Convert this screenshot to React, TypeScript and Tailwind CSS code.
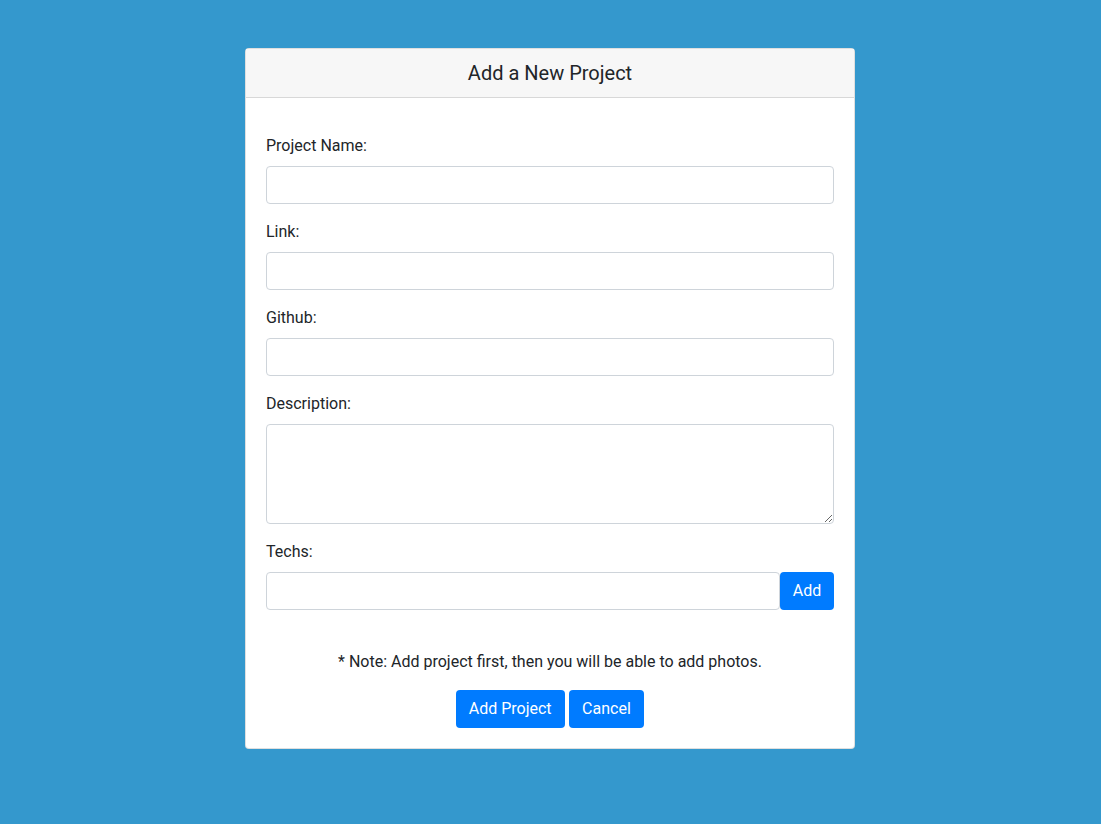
export default function App() {
  const fields = [
    { label: 'Project Name:', id: 'name' },
    { label: 'Link:', id: 'link' },
    { label: 'Github:', id: 'github' },
  ]

  return (
    <div className="min-h-screen bg-[#3498cd] pt-12 pr-px font-['Roboto',_'Liberation_Sans',_sans-serif] text-[16px] text-[#212529]">
      <div className="mx-auto w-[610px] rounded-[4px] border border-black/[0.125] bg-white">
        <div className="h-[49px] border-b border-black/[0.125] bg-[#f7f7f7] flex items-center justify-center">
          <h2 className="text-[20px] leading-[24px]">Add a New Project</h2>
        </div>

        <form className="px-5 pt-[36px] pb-5">
          {fields.map((f) => (
            <div key={f.id} className="mb-4">
              <label htmlFor={f.id} className="block mb-2 leading-6">{f.label}</label>
              <input
                id={f.id}
                type="text"
                className="block w-full h-[38px] rounded-[4px] border border-[#ced4da] px-3"
              />
            </div>
          ))}

          <div className="mb-4">
            <label htmlFor="desc" className="block mb-2 leading-6">Description:</label>
            <textarea
              id="desc"
              className="block w-full h-[100px] rounded-[4px] border border-[#ced4da] px-3 py-1.5"
            />
          </div>

          <div className="mb-4">
            <label htmlFor="techs" className="block mb-2 leading-6">Techs:</label>
            <div className="flex">
              <input
                id="techs"
                type="text"
                className="flex-1 h-[38px] rounded-[4px] border border-[#ced4da] px-3"
              />
              <button type="button" className="h-[38px] w-[54px] rounded-[4px] bg-[#007bff] text-white leading-6">
                Add
              </button>
            </div>
          </div>

          <p className="text-center leading-6 mt-[40px] mb-4">
            * Note: Add project first, then you will be able to add photos.
          </p>

          <div className="flex justify-center gap-1">
            <button type="button" className="h-[38px] px-[13px] rounded-[4px] bg-[#007bff] text-white leading-6">
              Add Project
            </button>
            <button type="button" className="h-[38px] px-[13.5px] rounded-[4px] bg-[#007bff] text-white leading-6">
              Cancel
            </button>
          </div>
        </form>
      </div>
    </div>
  )
}
